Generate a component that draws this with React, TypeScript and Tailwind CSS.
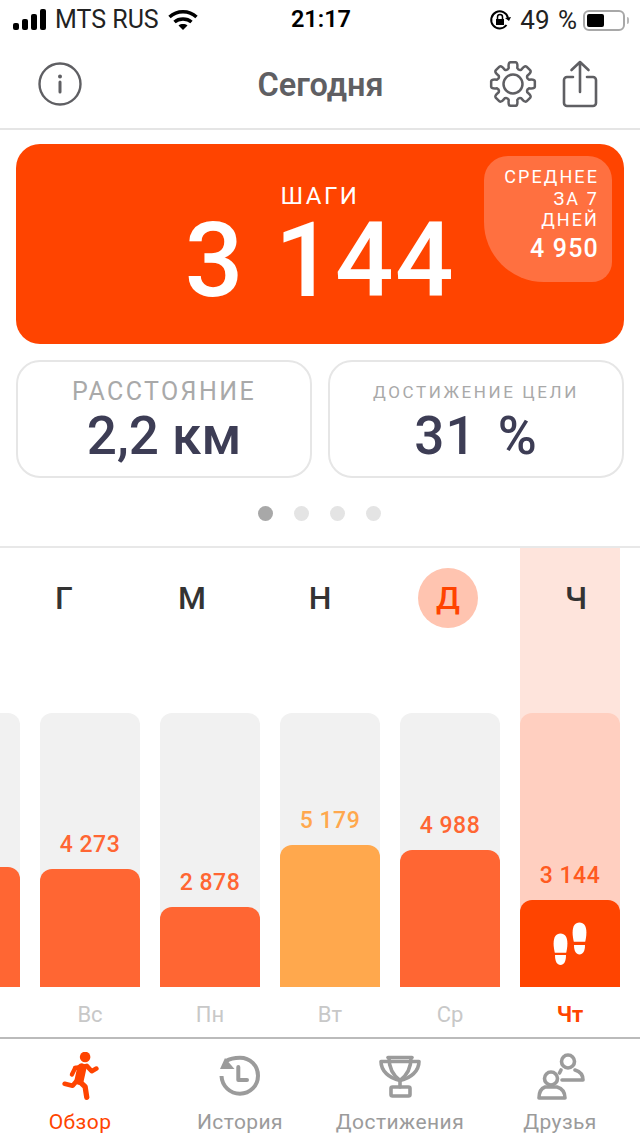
import React from "react";

const font = { fontFamily: "Roboto, 'Noto Sans', sans-serif" };

function gearPath() {
  const c = 24;
  const rO = 22;
  const rI = 16.5;
  const pt = (deg: number, r: number) => {
    const a = ((deg - 90) * Math.PI) / 180;
    return `${(c + r * Math.cos(a)).toFixed(2)} ${(c + r * Math.sin(a)).toFixed(2)}`;
  };
  let d = "";
  for (let i = 0; i < 8; i++) {
    const a = i * 45;
    d += `${i === 0 ? "M" : "L"}${pt(a - 15, rI)} Q${pt(a - 13, rO)} ${pt(a - 7, rO)} L${pt(a + 7, rO)} Q${pt(a + 13, rO)} ${pt(a + 15, rI)} Q${pt(a + 22.5, rI - 2)} ${pt(a + 30, rI)} `;
  }
  return d + "Z";
}

function Steps() {
  return (
    <svg width="34" height="44" viewBox="0 0 34 44" fill="white">
      <path d="M0.6 21.5 C0.6 15 3 11.5 7.5 11.5 C12 11.5 14.4 15 14.4 21.5 C14.4 25 13.8 28 13.2 30.8 H1.8 C1.2 28 0.6 25 0.6 21.5 Z" />
      <path d="M2 33 H13 C13 39.5 11 43 7.5 43 C4 43 2 39.5 2 33 Z" />
      <path d="M19.6 10.5 C19.6 4 22 0.5 26.5 0.5 C31 0.5 33.4 4 33.4 10.5 C33.4 14 32.8 17 32.2 19.8 H20.8 C20.2 17 19.6 14 19.6 10.5 Z" />
      <path d="M21 23 H32 C32 29 30 32.5 26.5 32.5 C23 32.5 21 29 21 23 Z" />
    </svg>
  );
}

type Col = { day: string; value?: string; bar: number; color: string; valueColor?: string; today?: boolean };
const cols: Col[] = [
  { day: "", bar: 120, color: "bg-[#ff6633]" },
  { day: "Вс", value: "4 273", bar: 118, color: "bg-[#ff6633]", valueColor: "text-[#ff6633]" },
  { day: "Пн", value: "2 878", bar: 80, color: "bg-[#ff6633]", valueColor: "text-[#ff6633]" },
  { day: "Вт", value: "5 179", bar: 142, color: "bg-[#ffa84d]", valueColor: "text-[#ffa84d]" },
  { day: "Ср", value: "4 988", bar: 137, color: "bg-[#ff6633]", valueColor: "text-[#ff6633]" },
  { day: "Чт", value: "3 144", bar: 87, color: "bg-[#ff4400]", valueColor: "text-[#ff5a20]", today: true },
];

const letters = ["Г", "М", "Н", "Д", "Ч"];

function Column({ c }: { c: Col }) {
  return (
    <div className="w-[100px] shrink-0 flex flex-col">
      <div className={`pt-[165px] ${c.today ? "bg-[#fee4dc]" : ""}`}>
        <div className={`h-[274px] rounded-t-[12px] flex flex-col justify-end items-center overflow-hidden ${c.today ? "bg-[#ffcfc0]" : "bg-[#f1f1f1]"}`}>
          {c.value && <div className={`text-[23px] leading-[28px] mb-[10px] tracking-[0.5px] font-medium ${c.valueColor}`}>{c.value}</div>}
          <div className={`w-full rounded-t-[12px] flex items-center justify-center ${c.color}`} style={{ height: c.bar }}>
            {c.today && <Steps />}
          </div>
        </div>
      </div>
      <div className={`h-[50px] pt-[5px] flex items-center justify-center text-[22px] ${c.today ? "text-[#ff4400] font-bold" : "text-[#c8c8c8]"}`}>{c.day}</div>
    </div>
  );
}

function Tab({ label, active, children }: { label: string; active?: boolean; children: React.ReactNode }) {
  return (
    <div className="flex-1 flex flex-col items-center pt-[13px]">
      <div className="h-[48px] flex items-center justify-center">{children}</div>
      <div className={`mt-[10px] text-[21px] leading-[24px] tracking-[0.45px] ${active ? "text-[#ff4400]" : "text-[#9b9b9b]"}`}>{label}</div>
    </div>
  );
}

export default function App() {
  return (
    <div className="w-[640px] h-[1136px] bg-white overflow-hidden flex flex-col" style={font}>
      {/* status bar */}
      <div className="h-[40px] grid grid-cols-[1fr_auto_1fr] items-center pl-[13px] pr-[11px] text-black text-[25px]">
        <div className="flex items-center">
          <svg width="34" height="22" viewBox="0 0 34 22" fill="black">
            <rect x="0" y="14" width="6" height="7" rx="2" />
            <rect x="9" y="10" width="6" height="11" rx="2" />
            <rect x="18" y="5" width="6" height="16" rx="2" />
            <rect x="27" y="0" width="6" height="21" rx="2" />
          </svg>
          <span className="ml-[8px] text-[#222]">MTS RUS</span>
          <svg className="ml-[9px]" width="30" height="22" viewBox="0 0 30 22" fill="none" stroke="black" strokeWidth="3.4">
            <path d="M1.5 8 C9 1 21 1 28.5 8" />
            <path d="M6.5 13 C11 9 19 9 23.5 13" />
            <path d="M15 21 L10.5 16.5 C13 14.6 17 14.6 19.5 16.5 Z" fill="black" stroke="none" />
          </svg>
        </div>
        <div className="font-semibold text-[23.5px]">21:17</div>
        <div className="flex items-center justify-end">
          <svg width="22" height="22" viewBox="0 0 22 22" fill="none" stroke="black" strokeWidth="2">
            <path d="M17.5 16 A8.5 8.5 0 1 1 19 9" />
            <path d="M16 9 L20 12 L22 8 Z" fill="black" stroke="none" />
            <rect x="7" y="10" width="8" height="6" fill="black" stroke="none" />
            <path d="M8.5 10 V8 a2.5 2.5 0 0 1 5 0 V10" strokeWidth="1.5" />
          </svg>
          <span className="ml-[9px] text-[#222] text-[26px] [word-spacing:2px]">49 %</span>
          <div className="ml-[6px] w-[42px] h-[21px] rounded-[6px] border-2 border-[#a8a8a8] p-[2px]">
            <div className="w-[17px] h-full rounded-[2px] bg-black" />
          </div>
          <div className="ml-[2px] w-[2px] h-[7px] rounded-r-[2px] bg-[#b8b8b8]" />
        </div>
      </div>

      {/* header */}
      <div className="h-[90px] shrink-0 grid grid-cols-[1fr_auto_1fr] items-center border-b-2 border-[#e5e5e5] pl-[38px] pr-[42px]">
        <svg width="44" height="44" viewBox="0 0 44 44" fill="none" stroke="#5f5f63" strokeWidth="2.4">
          <circle cx="22" cy="22" r="20.5" />
          <circle cx="22" cy="14.5" r="2" fill="#5f5f63" stroke="none" />
          <path d="M22 20 V30" strokeWidth="3" strokeLinecap="round" />
        </svg>
        <div className="text-[32.5px] font-semibold text-[#5f5f63] pt-[2px] pl-[5px]">Сегодня</div>
        <div className="flex items-center justify-end gap-[25px]">
          <svg width="48" height="48" viewBox="0 0 48 48" fill="none" stroke="#5f5f63" strokeWidth="2.5" strokeLinejoin="round">
            <circle cx="24" cy="24" r="9.5" />
            <path d={gearPath()} />
          </svg>
          <svg width="36" height="48" viewBox="0 0 36 48" fill="none" stroke="#5f5f63" strokeWidth="2.6" strokeLinecap="round" strokeLinejoin="round">
            <path d="M11 17 H5 a3 3 0 0 0-3 3 V43 a3 3 0 0 0 3 3 H31 a3 3 0 0 0 3-3 V20 a3 3 0 0 0-3-3 H25" />
            <path d="M18 32 V2 M9.5 10 L18 2 L26.5 10" />
          </svg>
        </div>
      </div>

      {/* main card */}
      <div className="px-[16px] pt-[14px] shrink-0">
        <div className="relative h-[200px] rounded-[24px] bg-[#ff4400] text-white flex flex-col items-center pt-[36px]">
          <div className="text-[24px] leading-[32px] tracking-[2.5px]">ШАГИ</div>
          <div className="text-[103px] leading-[90px] font-medium mt-[4px] tracking-[1.5px] [word-spacing:3px]">3 144</div>
          <div className="absolute right-[12px] top-[12px] w-[128px] h-[126px] bg-[#ff7040] rounded-tl-[24px] rounded-tr-[24px] rounded-br-[20px] rounded-bl-[60px] text-right pr-[13px] pt-[10px]">
            <div className="text-[18px] leading-[21.5px] tracking-[2.1px]">СРЕДНЕЕ<br />ЗА 7<br />ДНЕЙ</div>
            <div className="text-[25px] leading-[30px] mt-[3px] font-medium tracking-[1.2px]">4 950</div>
          </div>
        </div>

        <div className="flex gap-[16px] mt-[16px]">
          <div className="flex-1 h-[118px] rounded-[24px] border-2 border-[#e6e6e6] flex flex-col items-center pt-[14px]">
            <div className="text-[25px] leading-[32px] tracking-[2.4px] text-[#a9a9a9]">РАССТОЯНИЕ</div>
            <div className="text-[53px] leading-[56px] font-medium text-[#3d3d55]">2,2 км</div>
          </div>
          <div className="flex-1 h-[118px] rounded-[24px] border-2 border-[#e6e6e6] flex flex-col items-center pt-[14px]">
            <div className="text-[17px] leading-[32px] tracking-[2.6px] text-[#a9a9a9]">ДОСТИЖЕНИЕ ЦЕЛИ</div>
            <div className="text-[53px] leading-[56px] font-medium text-[#3d3d55] tracking-[1px] [word-spacing:7px]">31 %</div>
          </div>
        </div>
      </div>

      {/* dots */}
      <div className="h-[70px] shrink-0 flex items-center justify-center gap-[21px] pt-[2px] pr-[2px] border-b-2 border-[#e8e8e8]">
        <div className="w-[15px] h-[15px] rounded-full bg-[#a8a8a8]" />
        <div className="w-[15px] h-[15px] rounded-full bg-[#e4e4e4]" />
        <div className="w-[15px] h-[15px] rounded-full bg-[#e4e4e4]" />
        <div className="w-[15px] h-[15px] rounded-full bg-[#e4e4e4]" />
      </div>

      {/* chart */}
      <div className="relative flex gap-[20px] ml-[-80px] shrink-0 border-b-2 border-[#bbbbbb] h-[491px]">
        {cols.map((c, i) => (
          <Column key={i} c={c} />
        ))}
        <div className="absolute left-[80px] top-[20px] w-[640px] flex">
          {letters.map((l) => (
            <div key={l} className="w-[128px] flex justify-center">
              <div className={`w-[60px] h-[60px] rounded-full flex items-center justify-center text-[32px] font-medium ${l === "Д" ? "bg-[#ffc4b0] text-[#ff4400]" : "text-[#333333]"}`}>{l}</div>
            </div>
          ))}
        </div>
      </div>

      {/* tabs */}
      <div className="flex-1 flex">
        <Tab label="Обзор" active>
          <svg width="37" height="48" viewBox="30 20 112 145" fill="none" stroke="#ff4400" strokeLinecap="round" strokeLinejoin="round">
            <circle cx="100" cy="35" r="16" fill="#ff4400" stroke="none" />
            <path d="M70 68 L105 62 L120 78 L134 70" strokeWidth="14" />
            <path d="M70 68 L60 88" strokeWidth="13" />
            <path d="M90 68 L82 105" strokeWidth="28" />
            <path d="M74 108 L62 122 L38 116" strokeWidth="14" />
            <path d="M82 108 L100 125 L105 157" strokeWidth="16" />
          </svg>
        </Tab>
        <Tab label="История">
          <svg width="44" height="44" viewBox="0 0 44 44" fill="none" stroke="#9b9b9b" strokeWidth="4">
            <path d="M8 7 C12 4.5 17 3.7 22 3.7 C32 3.7 40 11.7 40 21.7 C40 31.7 32 39.7 22 39.7 C12 39.7 4 32 3.5 22" />
            <path d="M2 15 L7 4 L16.5 15 Z" fill="#9b9b9b" stroke="none" />
            <path d="M20.3 13 V26 H29" strokeLinecap="round" strokeLinejoin="round" />
          </svg>
        </Tab>
        <Tab label="Достижения">
          <svg width="42" height="43" viewBox="0 0 42 43" fill="none" stroke="#9b9b9b" strokeWidth="3.6" strokeLinejoin="round" strokeLinecap="round">
            <path d="M9 2.5 H33" />
            <path d="M2 6.5 H40 C40 16 32 23 21 25.5 C10 23 2 16 2 6.5 Z" />
            <path d="M10 3 C10 13 15 21 21 25.5 C27 21 32 13 32 3" />
            <path d="M21 25 V32" />
            <rect x="12" y="32" width="19" height="9" rx="1.5" />
          </svg>
        </Tab>
        <Tab label="Друзья">
          <svg width="49" height="48" viewBox="0 0 49 48" fill="none" stroke="#9b9b9b" strokeWidth="3.6" strokeLinejoin="round" strokeLinecap="round">
            <circle cx="32" cy="9.5" r="6.5" />
            <path d="M26 28 H47 C47 23 44 19.5 39 18" />
            <path d="M25 18 C24.5 19 24 20 23.5 21" />
            <circle cx="15" cy="26.5" r="6.5" />
            <path d="M3 46 H29 C29 40 26 36.5 21 35 H9 C5 36.5 3 40 3 46 Z" />
          </svg>
        </Tab>
      </div>
    </div>
  );
}
